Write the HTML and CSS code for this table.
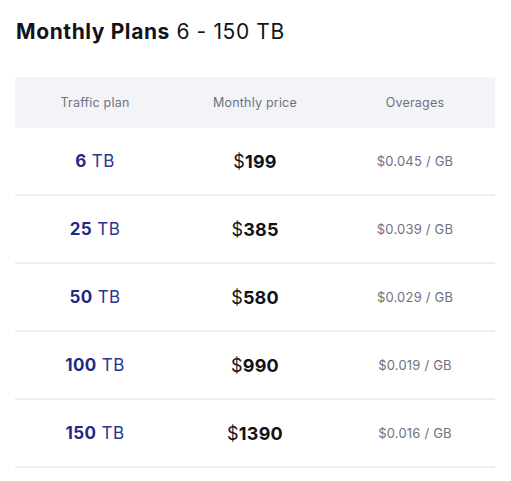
FILE: index.html
```html
<!DOCTYPE html>
<html>
<head>
<meta charset="utf-8">
<link rel="stylesheet" href="styles.css">
</head>
<body>
<div class="wrap">
  <h1 class="title"><b>Monthly Plans</b> 6 - 150 TB</h1>
  <div class="table">
    <div class="row head">
      <div class="cell">Traffic plan</div>
      <div class="cell">Monthly price</div>
      <div class="cell">Overages</div>
    </div>
    <div class="row">
      <div class="cell plan"><b>6</b> TB</div>
      <div class="cell price">$<b>199</b></div>
      <div class="cell over">$0.045 / GB</div>
    </div>
    <div class="row">
      <div class="cell plan"><b>25</b> TB</div>
      <div class="cell price">$<b>385</b></div>
      <div class="cell over">$0.039 / GB</div>
    </div>
    <div class="row">
      <div class="cell plan"><b>50</b> TB</div>
      <div class="cell price">$<b>580</b></div>
      <div class="cell over">$0.029 / GB</div>
    </div>
    <div class="row">
      <div class="cell plan"><b>100</b> TB</div>
      <div class="cell price">$<b>990</b></div>
      <div class="cell over">$0.019 / GB</div>
    </div>
    <div class="row">
      <div class="cell plan"><b>150</b> TB</div>
      <div class="cell price">$<b>1390</b></div>
      <div class="cell over">$0.016 / GB</div>
    </div>
  </div>
</div>
</body>
</html>
```
FILE: styles.css
```css
html, body {
  margin: 0;
  padding: 0;
  background: #ffffff;
}
body {
  font-family: Inter, Lato, sans-serif;
  color: #111318;
}
.wrap {
  padding: 18px 16px 0 15px;
  width: 480px;
}
.title {
  margin: 0 0 0 1px;
  font-size: 21px;
  font-weight: 400;
  line-height: 28px;
  letter-spacing: 0.6px;
  color: #11141a;
}
.title b {
  font-weight: 700;
}
.table {
  margin-top: 31px;
}
.row {
  display: grid;
  grid-template-columns: 1fr 1fr 1fr;
  height: 66px;
  border-bottom: 2px solid #eeeeef;
  align-items: center;
  text-align: center;
}
.row.head {
  height: 51px;
  border-bottom: none;
  background: #f3f4f7;
  font-size: 12.5px;
  letter-spacing: 0.2px;
  color: #6e7182;
}
.plan {
  font-size: 17px;
  letter-spacing: 0.4px;
  color: #2a3590;
}
.plan b {
  font-weight: 700;
  color: #1f2a86;
}
.price {
  font-size: 18px;
  letter-spacing: 0.2px;
  color: #111318;
}
.price b {
  font-weight: 700;
}
.over {
  font-size: 13px;
  letter-spacing: 0.2px;
  color: #6e7182;
}
```
